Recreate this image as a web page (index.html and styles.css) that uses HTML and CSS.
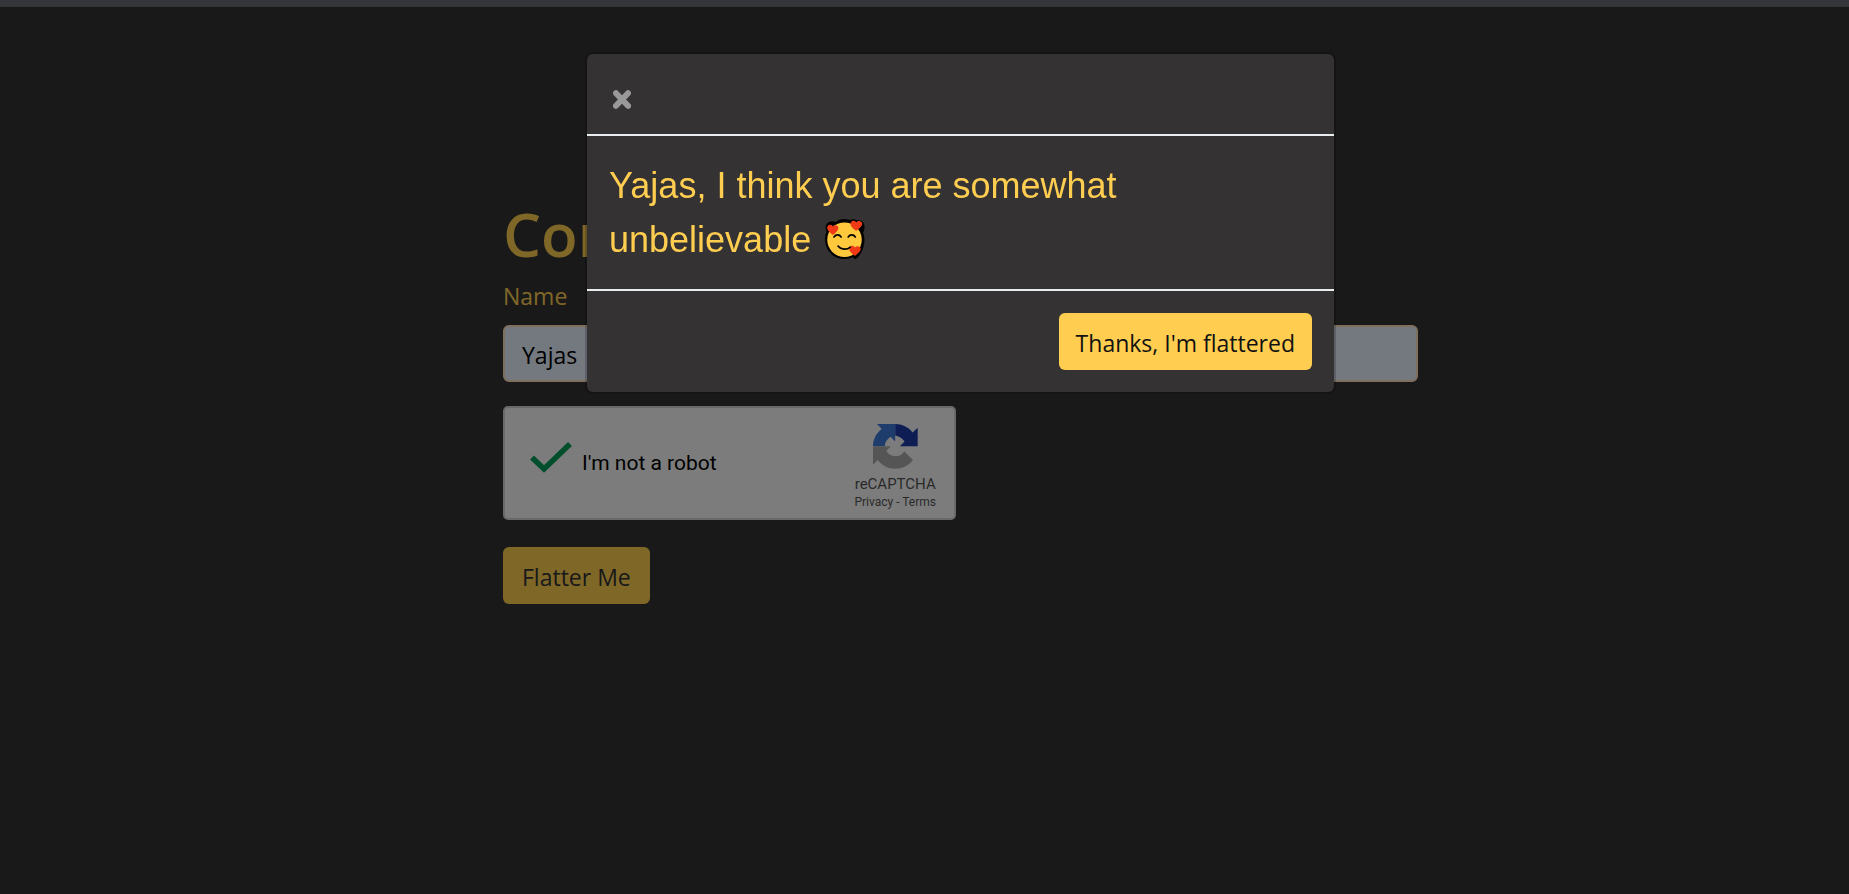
FILE: index.html
```html
<!DOCTYPE html>
<html lang="en">
<head>
<meta charset="utf-8">
<title>Compliment</title>
<link rel="stylesheet" href="styles.css">
</head>
<body>
<main class="page">
  <form class="form">
    <h1 class="title">Com</h1>
    <label class="label" for="name">Name</label>
    <input class="field" id="name" type="text" value="Yajas">
    <div class="captcha">
      <svg class="check" viewBox="0 0 42 32" aria-hidden="true"><path d="M2 16.500 14 28 40 3" fill="none" stroke="#009d58" stroke-width="5.500"/></svg>
      <span class="captcha-text">I'm not a robot</span>
      <div class="brand">
        <svg class="logo" viewBox="0 0 134 134" aria-hidden="true">
          <path fill="#1c3aa9" d="M66 0c21 0 39 9 52 25l15-14v55H80l14-14c-7-10-16-16-28-18z"/>
          <path fill="#3c7ad9" d="M66 0H12l14 15C10 27 0 45 0 66h35c1-12 7-21 17-28l14 14z"/>
          <path fill="#ababab" d="M0 66v55l14-14c13 16 31 26 52 26 22 0 40-9 53-26L93 81c-5 9-14 15-26 15-13 0-23-7-27-17l14-13z"/>
        </svg>
        <span class="brand-name">reCAPTCHA</span>
        <span class="brand-links"><a href="#privacy">Privacy</a> - <a href="#terms">Terms</a></span>
      </div>
    </div>
    <button class="button" type="button">Flatter Me</button>
  </form>
</main>
<div class="backdrop">
  <div class="modal" role="dialog" aria-modal="true" aria-labelledby="message">
    <header class="modal-header">
      <button class="close" type="button" aria-label="Close">
        <svg class="close-icon" viewBox="0 0 18 19" aria-hidden="true"><path d="M3 3.200 15 15.800M15 3.200 3 15.800" stroke="#999" stroke-width="6" stroke-linecap="round"/></svg>
      </button>
    </header>
    <p class="message" id="message">Yajas, I think you are somewhat unbelievable
      <svg class="emoji" viewBox="0 0 120 124" role="img" aria-label="Smiling face with hearts">
        <path fill="#000" d="M60 3C49 3 40 6 33 12 25 8 15 10 9 16c-6 7-6 16-2 24C3 50 2 60 3 70c3 29 26 51 57 51 9 0 17-2 24-5l8 6c9-6 17-17 21-28 7-17 8-35 2-50 4-9 6-20 2-28-4-8-13-11-21-9-5-4-14-5-19-1-6-2-11-3-17-3z"/>
        <circle cx="60" cy="64" r="51" fill="#ffc83d"/>
        <g fill="#f03a17">
          <path d="M26 50C17 43 8 36 9 28c1-9 12-11 17-3 5-7 16-4 16 4 0 8-8 14-16 21z"/>
          <path d="M95 38C85 31 77 24 78 16c1-9 12-11 17-3 5-7 17-4 17 4 0 8-9 14-17 21z"/>
          <path d="M91 112C82 105 73 98 74 90c1-9 12-11 17-3 5-7 17-4 17 4 0 8-9 14-17 21z"/>
        </g>
        <g fill="none" stroke="#000" stroke-width="5" stroke-linecap="round">
          <path d="M29 56c5-8 16-8 21 0M71 56c5-8 16-8 21 0M41 83c9 11 26 12 36 3"/>
        </g>
      </svg>
    </p>
    <footer class="modal-footer">
      <button class="button button-bright" type="button">Thanks, I'm flattered</button>
    </footer>
  </div>
</div>
</body>
</html>
```
FILE: styles.css
```css
* { box-sizing: border-box; }

body {
  margin: 0;
  background: #333;
  border-top: 6px solid #35363b;
  color: #ffce50;
  font: 23px/36px "Open Sans", sans-serif;
}

.page {
  padding: 192px 0 0 72px;
}

.form {
  width: 915px;
  max-width: 100%;
  margin: 0 auto;
}

.title {
  margin: 0 0 8px;
  font-size: 60px;
  line-height: 72px;
  font-weight: 600;
}

.label {
  display: block;
  margin-bottom: 11px;
}

.field {
  display: block;
  width: 100%;
  height: 57px;
  padding: 2px 17px 0;
  border: 2px solid #ffdeba;
  border-radius: 6px;
  background: #e8f0fe;
  color: #000;
  font: inherit;
}

.captcha {
  display: flex;
  align-items: center;
  width: 453px;
  max-width: 100%;
  height: 114px;
  margin: 24px 0 27px;
  padding: 0 18px 0 25px;
  border: 2px solid #d3d3d3;
  border-radius: 5px;
  background: #f9f9f9;
  color: #000;
  font-family: Roboto, sans-serif;
}

.check {
  width: 42px;
  height: 32px;
  margin-bottom: 12px;
}

.captcha-text {
  margin-left: 10px;
  font-size: 21px;
}

.brand {
  display: flex;
  flex-direction: column;
  align-items: center;
  margin-left: auto;
  padding-top: 8px;
  color: #555;
}

.logo {
  width: 45px;
  height: 45px;
  margin-bottom: 5px;
}

.brand-name {
  font-size: 15px;
  line-height: 20px;
}

.brand-links {
  font-size: 12px;
  line-height: 16px;
}

.brand-links a {
  color: inherit;
  text-decoration: none;
}

.button {
  height: 57px;
  padding: 3px 19px 0;
  border: 0;
  border-radius: 6px;
  background: #ffce50;
  color: #333;
  font: inherit;
}

.button-bright {
  padding: 3px 17px 0;
  color: #111;
}

.backdrop {
  position: fixed;
  inset: 7px 0 0;
  padding: 47px 0 0 72px;
  background: rgba(0, 0, 0, 0.5);
}

.modal {
  width: 747px;
  max-width: 100%;
  margin: 0 auto;
  border-radius: 6px;
  background: #353233;
  box-shadow: 0 0 0 2px rgba(0, 0, 0, 0.2);
}

.modal-header {
  display: flex;
  padding: 36px 26px 25px;
}

.close {
  display: flex;
  padding: 0;
  border: 0;
  background: none;
}

.close-icon {
  width: 18px;
  height: 19px;
}

.message {
  margin: 0;
  padding: 23px 22px 22px;
  border: solid #e9ecef;
  border-width: 2px 0;
  font: 36px/54px "Liberation Sans", Arial, sans-serif;
}

.emoji {
  width: 41px;
  height: 42px;
  margin-left: 3px;
  vertical-align: -8px;
}

.modal-footer {
  display: flex;
  justify-content: flex-end;
  padding: 22px;
}
```
